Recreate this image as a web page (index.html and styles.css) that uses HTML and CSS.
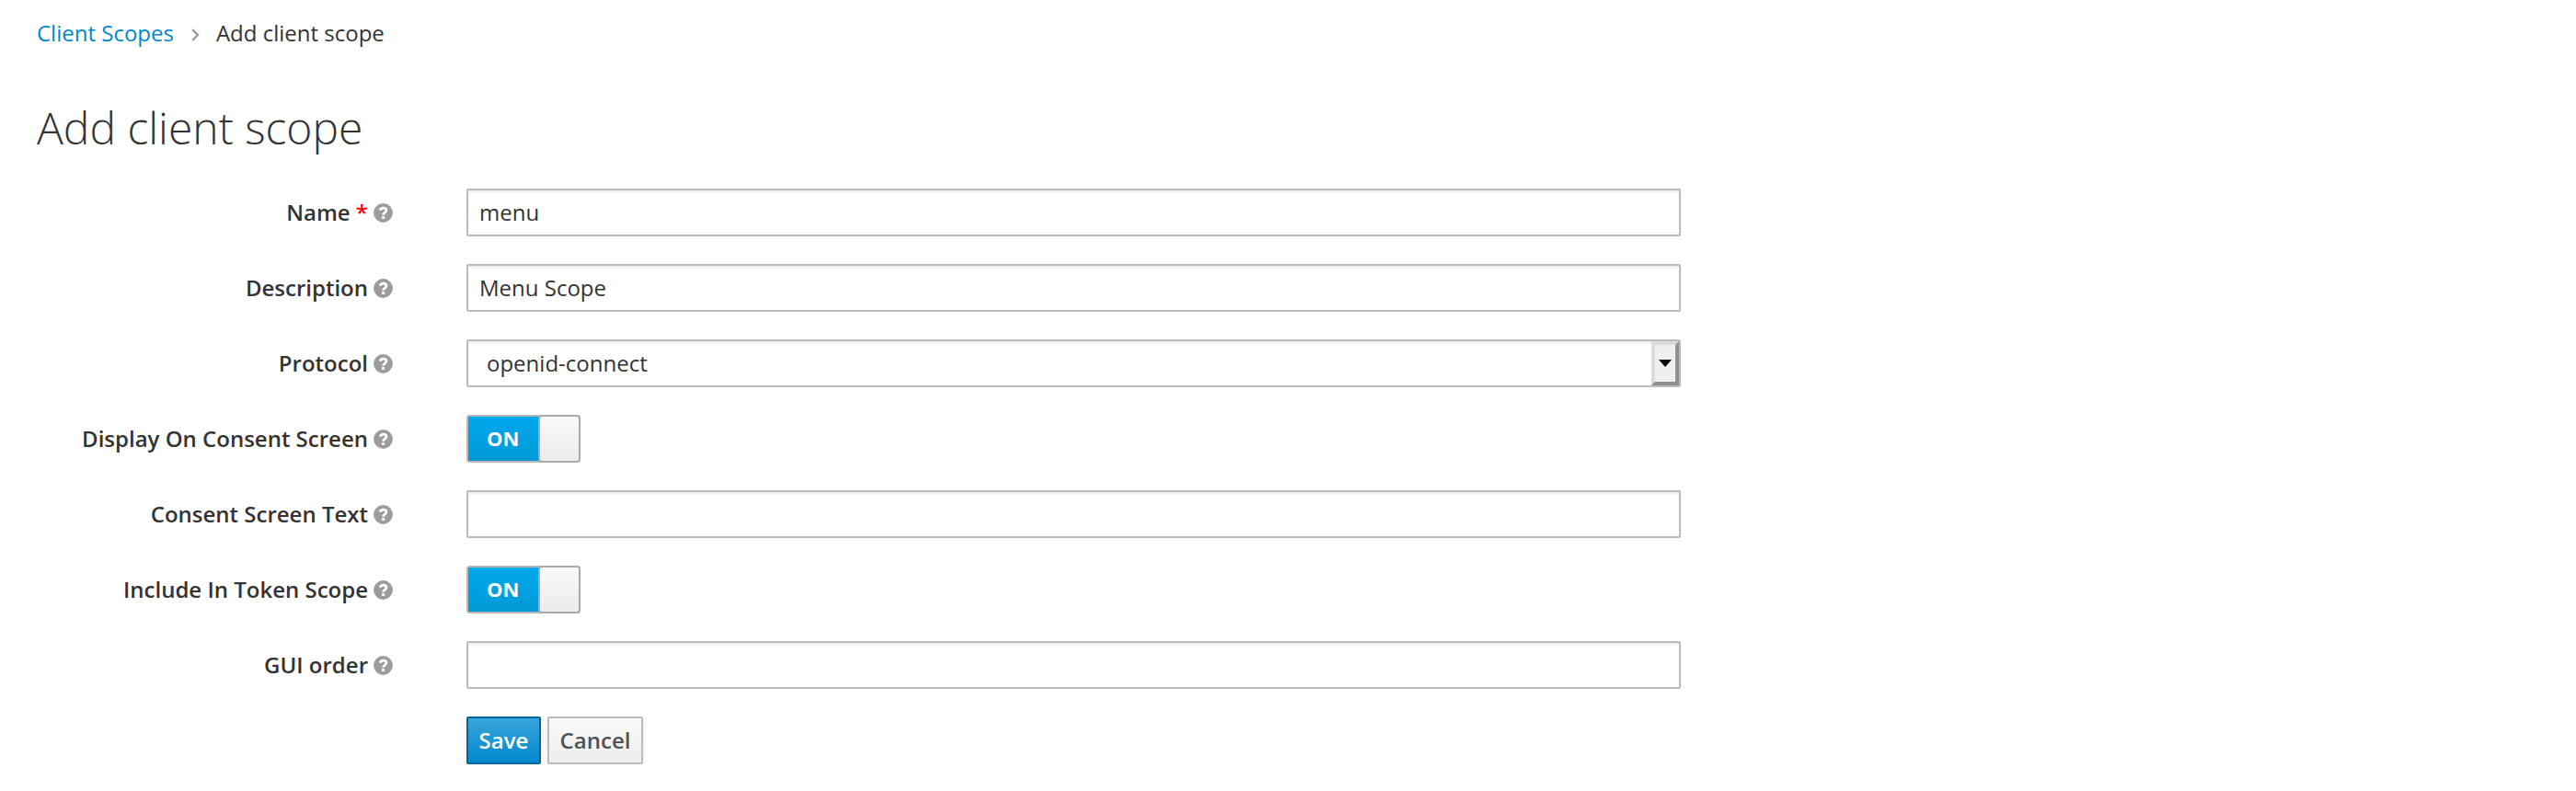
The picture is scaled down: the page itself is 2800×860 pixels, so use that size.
FILE: index.html
```
<!DOCTYPE html>
<html lang="en">
<head>
<meta charset="utf-8">
<title>Add client scope</title>
<link rel="stylesheet" href="styles.css">
</head>
<body>
<svg class="defs" width="0" height="0" aria-hidden="true">
  <symbol id="help" viewBox="0 0 21 21">
    <circle class="help-disc" cx="10.500" cy="10.500" r="10.400"/>
    <path class="help-mark" d="M6.900 7.600C7.900 5.900 9 5.200 10.700 5.200c1.900 0 3.200 1.100 3.200 2.600 0 2.400-3.300 2.300-3.300 4.900"/>
    <path class="help-dot" d="M9.100 14.100h3v2.900h-3z"/>
  </symbol>
</svg>
<main class="page">
  <nav class="breadcrumb">
    <a href="#">Client Scopes</a>
    <svg class="chevron" viewBox="0 0 9 14"><path d="M1.200 1.200 7 7l-5.800 5.800"/></svg>
    <span>Add client scope</span>
  </nav>
  <h1 class="title">Add client scope</h1>
  <form class="form">
    <div class="row">
      <label class="label" for="name">Name <span class="required">*</span></label><svg class="help"><use href="#help"/></svg>
      <input class="control" id="name" type="text" value="menu">
    </div>
    <div class="row">
      <label class="label" for="description">Description</label><svg class="help"><use href="#help"/></svg>
      <input class="control" id="description" type="text" value="Menu Scope">
    </div>
    <div class="row">
      <span class="label">Protocol</span><svg class="help"><use href="#help"/></svg>
      <div class="control select"><span class="select-value">openid-connect</span><span class="select-button"><svg class="arrow" viewBox="0 0 14 8"><path d="M0 0h14L7 8z"/></svg></span></div>
    </div>
    <div class="row">
      <span class="label">Display On Consent Screen</span><svg class="help"><use href="#help"/></svg>
      <div class="switch"><span class="switch-on">ON</span><span class="switch-handle"></span></div>
    </div>
    <div class="row">
      <label class="label" for="consent">Consent Screen Text</label><svg class="help"><use href="#help"/></svg>
      <input class="control" id="consent" type="text">
    </div>
    <div class="row">
      <span class="label">Include In Token Scope</span><svg class="help"><use href="#help"/></svg>
      <div class="switch"><span class="switch-on">ON</span><span class="switch-handle"></span></div>
    </div>
    <div class="row">
      <label class="label" for="order">GUI order</label><svg class="help"><use href="#help"/></svg>
      <input class="control" id="order" type="text">
    </div>
    <div class="actions">
      <button class="button primary" type="button">Save</button>
      <button class="button secondary" type="button">Cancel</button>
    </div>
  </form>
</main>
</body>
</html>
```
FILE: styles.css
```
* {
  box-sizing: border-box;
}

body {
  margin: 0;
  background: #fff;
  color: #333;
  font: 24px/39px "Open Sans", sans-serif;
}

.defs {
  display: block;
}

.page {
  padding: 16px 40px 0;
}

.breadcrumb {
  display: flex;
  align-items: center;
  height: 40px;
  padding-bottom: 1px;
}

.breadcrumb a {
  color: #0088ce;
  text-decoration: none;
}

.chevron {
  width: 9px;
  height: 14px;
  margin: 4px 18px 0 19px;
  fill: none;
  stroke: #9c9c9c;
  stroke-width: 2.4;
}

.title {
  margin: 56px 0 0;
  font-size: 48px;
  font-weight: 300;
  line-height: 53px;
}

.form {
  display: flex;
  flex-direction: column;
  gap: 30px;
  margin-top: 40px;
}

.row {
  display: grid;
  grid-template-columns: 360px 21px 1320px;
  column-gap: 6px;
  height: 52px;
}

.label {
  text-align: right;
  font-weight: 600;
  line-height: 51px;
}

.required {
  color: #f00;
}

.help {
  width: 21px;
  height: 21px;
  margin-top: 16px;
}

.help-disc {
  fill: #9c9c9c;
}

.help-mark {
  fill: none;
  stroke: #fff;
  stroke-width: 2.8;
}

.help-dot {
  fill: #fff;
}

.control {
  width: 1320px;
  height: 52px;
  margin-left: 74px;
  padding: 3px 12px 4px;
  border: 2px solid #bbb;
  border-radius: 2px;
  background: #fff;
  box-shadow: inset 0 2px 2px rgba(3, 3, 3, 0.075);
  color: #333;
  font: inherit;
  line-height: 41px;
}

.select {
  display: flex;
  padding: 0;
}

.select-value {
  flex: 1;
  padding-left: 20px;
  line-height: 47px;
}

.select-button {
  display: flex;
  align-items: center;
  justify-content: center;
  width: 30px;
  border: 4px solid;
  border-color: #dadada #909090 #909090 #dadada;
  background: #efefef;
}

.arrow {
  width: 14px;
  height: 8px;
}

.switch {
  display: flex;
  width: 124px;
  height: 52px;
  margin-left: 74px;
  border: 2px solid #b7b7b7;
  border-radius: 4px;
  background: #00a0dc;
}

.switch-on {
  flex: 1;
  padding-left: 20px;
  background: linear-gradient(#00a8ec, #009ad6);
  color: #fff;
  font-size: 22px;
  font-weight: 700;
  line-height: 46px;
}

.switch-handle {
  width: 46px;
  margin: -2px -2px -2px 0;
  border: 2px solid #aaa;
  border-radius: 4px;
  background: linear-gradient(#fafafa, #ebebeb);
}

.actions {
  display: flex;
  gap: 7px;
  padding-left: 467px;
}

.button {
  height: 52px;
  padding: 3px 0 4px;
  border: 2px solid;
  border-radius: 2px;
  box-shadow: 0 4px 6px rgba(3, 3, 3, 0.1);
  font: 600 24px/41px "Open Sans", sans-serif;
}

.primary {
  width: 81px;
  border-color: #00659c;
  background: linear-gradient(#39a5dc, #0088ce);
  color: #fff;
}

.secondary {
  width: 104px;
  border-color: #bbb;
  background: linear-gradient(#fafafa, #ededed);
  color: #4d5258;
}
```
